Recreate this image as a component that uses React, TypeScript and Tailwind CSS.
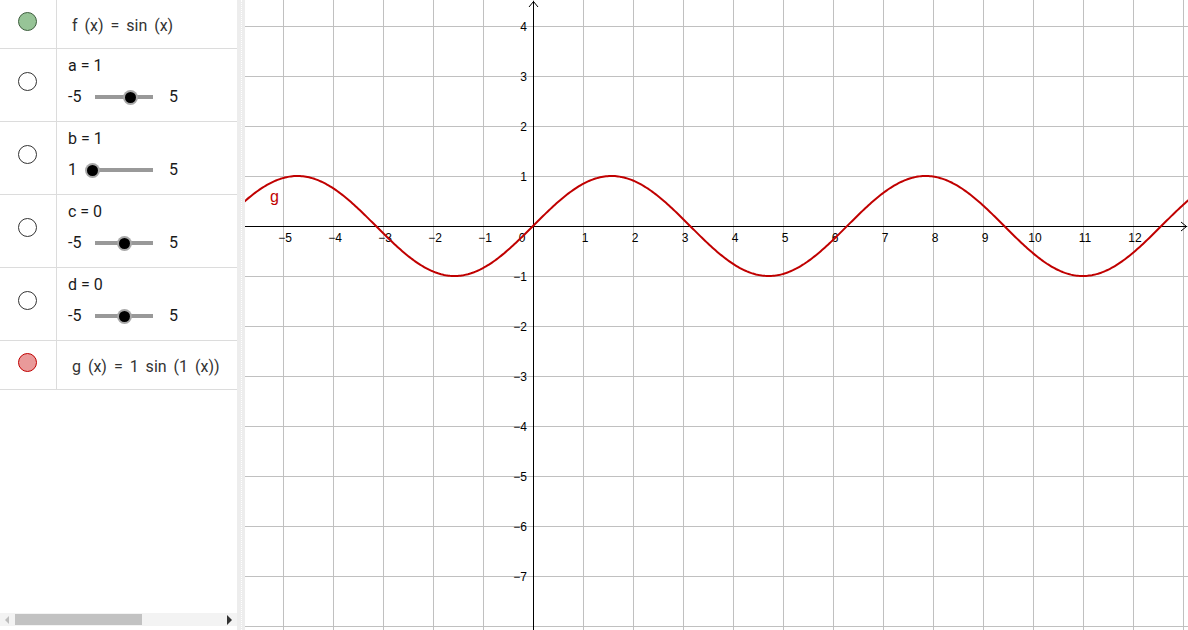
import React from "react";

const W = 943;
const H = 630;
const OX = 288; // origin x in svg coords (533 - 245)
const OY = 226;
const U = 50;

function Marker({ kind }: { kind: "green" | "red" | "empty" }) {
  if (kind === "green")
    return <span className="block h-[19px] w-[19px] rounded-full border border-[#3d5e3d] bg-[#97c497]" />;
  if (kind === "red")
    return <span className="block h-[19px] w-[19px] rounded-full border border-[#c00000] bg-[#e99a9a]" />;
  return <span className="block h-[19px] w-[19px] rounded-full border border-[#333] bg-white" />;
}

function FuncRow({ kind, text }: { kind: "green" | "red"; text: string }) {
  return (
    <div className="flex h-[49px] shrink-0 border-b border-[#dcdcdc]">
      <div className="flex w-[57px] shrink-0 justify-center border-r border-[#dcdcdc] pt-[12px] pr-[1px]">
        <Marker kind={kind} />
      </div>
      <div
        className="flex items-center pl-[15px] pt-[4px] text-[16px] text-[#333] [word-spacing:3px]"
        style={{ fontFamily: "Roboto, 'Noto Sans', sans-serif" }}
      >
        {text}
      </div>
    </div>
  );
}

function SliderRow({ name, value, min, max }: { name: string; value: number; min: number; max: number }) {
  const cx = (64 * (value - min)) / (max - min);
  return (
    <div className="flex h-[73px] shrink-0 border-b border-[#dcdcdc]">
      <div className="flex w-[57px] shrink-0 justify-center border-r border-[#dcdcdc] pt-[23px] pr-[1px]">
        <Marker kind="empty" />
      </div>
      <div
        className="flex flex-col pl-[11px] text-[16px] text-[#1a1a1a]"
        style={{ fontFamily: "Roboto, 'Noto Sans', sans-serif" }}
      >
        <div className="mt-[7px] h-[20px] leading-[20px]">
          {name} = {value}
        </div>
        <div className="mt-[11px] flex h-[20px] items-center leading-[20px]">
          <span className="w-[24px] shrink-0">{min}</span>
          <div className="relative h-[20px] w-[64px] shrink-0">
            <div className="absolute left-[3px] top-[8px] h-[4px] w-[58px] bg-[#999]" />
            <div
              className="absolute top-[2.5px] flex h-[15px] w-[15px] items-center justify-center rounded-full bg-[#a8a8a8]"
              style={{ left: cx - 7.5 }}
            >
              <span className="block h-[11px] w-[11px] rounded-full bg-black" />
            </div>
          </div>
          <span className="ml-[13px]">{max}</span>
        </div>
      </div>
    </div>
  );
}

function Graph() {
  const vx: number[] = [];
  for (let k = -5; k <= 13; k++) vx.push(OX + k * U);
  const hy: number[] = [];
  for (let k = 4; k >= -8; k--) hy.push(OY - k * U);
  const pts: string[] = [];
  for (let px = -2; px <= W + 2; px += 1.5) {
    const X = (px - OX) / U;
    const Y = Math.sin(X);
    pts.push(`${px.toFixed(2)},${(OY - U * Y).toFixed(2)}`);
  }
  const xLabels: number[] = [-5, -4, -3, -2, -1, 1, 2, 3, 4, 5, 6, 7, 8, 9, 10, 11, 12];
  const yLabels: number[] = [4, 3, 2, 1, -1, -2, -3, -4, -5, -6, -7];
  const fmt = (n: number) => (n < 0 ? "\u2212" + Math.abs(n) : String(n));
  return (
    <svg width={W} height={H} viewBox={`0 0 ${W} ${H}`} className="block">
      <g stroke="#c0c0c0" strokeWidth={1} shapeRendering="crispEdges">
        {vx.map((x) => (
          <line key={"v" + x} x1={x + 0.5} y1={0} x2={x + 0.5} y2={H} />
        ))}
        {hy.map((y) => (
          <line key={"h" + y} x1={0} y1={y + 0.5} x2={W} y2={y + 0.5} />
        ))}
      </g>
      <g stroke="#000" strokeWidth={1} fill="none">
        <line x1={OX + 0.5} y1={1} x2={OX + 0.5} y2={H} shapeRendering="crispEdges" />
        <line x1={0} y1={OY + 0.5} x2={W - 1} y2={OY + 0.5} shapeRendering="crispEdges" />
        <polyline points={`${OX - 4},${7} ${OX + 0.5},${1.5} ${OX + 5},${7}`} />
        <polyline points={`${W - 7},${OY - 4} ${W - 1.5},${OY + 0.5} ${W - 7},${OY + 5}`} />
      </g>
      <g fontFamily="'Liberation Sans', Arial, sans-serif" fontSize={12} fill="#000">
        {xLabels.map((n) => (
          <text key={"xl" + n} x={OX + n * U + 2} y={OY + 16} textAnchor="middle">
            {fmt(n)}
          </text>
        ))}
        <text x={OX - 11} y={OY + 16} textAnchor="middle">
          0
        </text>
        {yLabels.map((n) => (
          <text key={"yl" + n} x={OX - 6} y={OY - n * U + 5} textAnchor="end">
            {fmt(n)}
          </text>
        ))}
      </g>
      <polyline points={pts.join(" ")} fill="none" stroke="#c00000" strokeWidth={2} strokeLinejoin="round" />
      <text x={25} y={202} fill="#c00000" fontSize={16} fontFamily="'Liberation Sans', Arial, sans-serif">
        g
      </text>
    </svg>
  );
}

export default function App() {
  return (
    <div className="flex h-[630px] w-[1188px] overflow-hidden bg-white">
      <div className="flex w-[237px] shrink-0 flex-col">
        <FuncRow kind="green" text="f (x) = sin (x)" />
        <SliderRow name="a" value={1} min={-5} max={5} />
        <SliderRow name="b" value={1} min={1} max={5} />
        <SliderRow name="c" value={0} min={-5} max={5} />
        <SliderRow name="d" value={0} min={-5} max={5} />
        <FuncRow kind="red" text="g (x) = 1 sin (1 (x))" />
        <div className="flex-1" />
        <div className="mb-[4px] flex h-[13px] items-center bg-[#f3f3f3]">
          <span className="ml-[5px] block h-0 w-0 border-y-[4px] border-r-[4px] border-y-transparent border-r-[#bdbdbd]" />
          <div className="ml-[6px] h-[11px] w-[127px] bg-[#c2c2c2]" />
          <div className="flex-1" />
          <span className="mr-[5px] block h-0 w-0 border-y-[5px] border-l-[5px] border-y-transparent border-l-[#333]" />
        </div>
      </div>
      <div className="flex w-[8px] shrink-0 justify-center bg-[#ededed]">
        <div className="h-full w-0 border-l border-dotted border-white" />
      </div>
      <div className="flex-1 overflow-hidden">
        <Graph />
      </div>
    </div>
  );
}
